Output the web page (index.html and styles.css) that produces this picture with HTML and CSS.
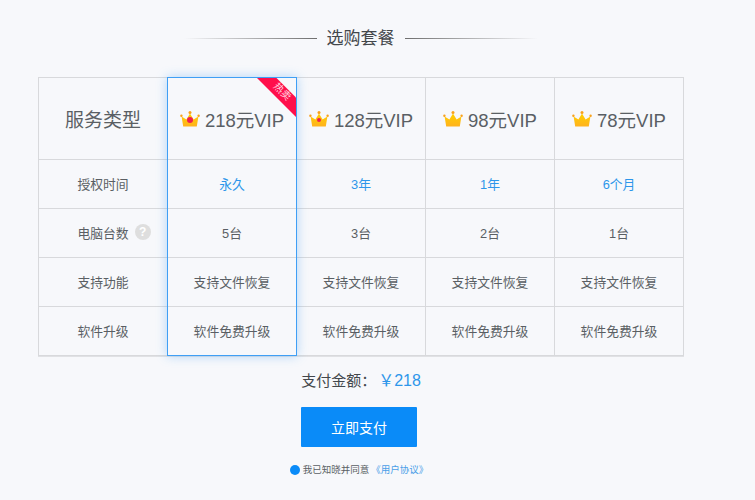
FILE: index.html
```html
<!DOCTYPE html>
<html lang="zh">
<head>
<meta charset="utf-8">
<title>选购套餐</title>
<link rel="stylesheet" href="styles.css">
</head>
<body>
<svg class="defs" width="0" height="0" aria-hidden="true">
  <defs>
    <linearGradient id="gold" x1="0" y1="0" x2="0" y2="1">
      <stop offset="0" stop-color="#ffd000"/>
      <stop offset="1" stop-color="#ffb21e"/>
    </linearGradient>
    <symbol id="crown" viewBox="0 0 20 16">
      <path d="M3.2 15.5 1.6 5.4 6.4 8.4 10 2.4 13.6 8.4 18.4 5.4 16.8 15.5Z" fill="url(#gold)"/>
      <circle cx="1.4" cy="4.8" r="1.2" fill="#f9a11b"/>
      <circle cx="18.6" cy="4.8" r="1.2" fill="#f9a11b"/>
      <circle cx="10" cy="1.6" r="1.5" fill="#f9a11b"/>
    </symbol>
  </defs>
</svg>
<main class="page">
  <header class="title">
    <span class="rule rule-left"></span>
    <h1>选购套餐</h1>
    <span class="rule rule-right"></span>
  </header>

  <section class="plans">
    <div class="cell head head-label">服务类型</div>
    <div class="cell head plan"><span class="crown-wrap"><svg class="crown"><use href="#crown"/></svg><svg class="gem" viewBox="0 0 8 8"><circle cx="4" cy="4" r="4" fill="#f01f4f"/></svg></span><span>218元VIP</span></div>
    <div class="cell head plan"><span class="crown-wrap"><svg class="crown"><use href="#crown"/></svg><svg class="gem gem-small" viewBox="0 0 8 8"><circle cx="4" cy="4" r="4" fill="#f01f4f"/></svg></span><span>128元VIP</span></div>
    <div class="cell head plan"><span class="crown-wrap"><svg class="crown"><use href="#crown"/></svg></span><span>98元VIP</span></div>
    <div class="cell head plan"><span class="crown-wrap"><svg class="crown"><use href="#crown"/></svg></span><span>78元VIP</span></div>

    <div class="cell">授权时间</div>
    <div class="cell accent">永久</div>
    <div class="cell accent">3年</div>
    <div class="cell accent">1年</div>
    <div class="cell accent">6个月</div>

    <div class="cell"><span class="with-help">电脑台数<span class="help">?</span></span></div>
    <div class="cell">5台</div>
    <div class="cell">3台</div>
    <div class="cell">2台</div>
    <div class="cell">1台</div>

    <div class="cell">支持功能</div>
    <div class="cell">支持文件恢复</div>
    <div class="cell">支持文件恢复</div>
    <div class="cell">支持文件恢复</div>
    <div class="cell">支持文件恢复</div>

    <div class="cell">软件升级</div>
    <div class="cell">软件免费升级</div>
    <div class="cell">软件免费升级</div>
    <div class="cell">软件免费升级</div>
    <div class="cell">软件免费升级</div>

    <div class="selected"><span class="ribbon"></span><span class="ribbon-text">热卖</span></div>
  </section>

  <section class="checkout">
    <p class="amount">支付金额：<span class="price">￥218</span></p>
    <button class="pay" type="button">立即支付</button>
    <p class="agree"><span class="radio"></span>我已知晓并同意<a class="link" href="#">《用户协议》</a></p>
  </section>
</main>
</body>
</html>
```

FILE: styles.css
```css
* { box-sizing: border-box; }

html, body { margin: 0; }

body {
  height: 500px;
  overflow: hidden;
  background: #f7f8fb;
  color: #5a5f64;
  font-family: "Liberation Sans", "Noto Sans CJK SC", sans-serif;
}

.defs { position: absolute; }

.page { width: 755px; }

.title {
  display: flex;
  align-items: center;
  justify-content: center;
  gap: 10px;
  width: 721px;
  height: 77px;
}

.title h1 {
  margin: 0;
  font-size: 17px;
  font-weight: 400;
  color: #43474b;
  line-height: 24px;
}

.rule { width: 133px; height: 1px; }
.rule-left { background: linear-gradient(90deg, rgba(110,110,110,0), #6e6e6e); }
.rule-right { background: linear-gradient(90deg, #6e6e6e, rgba(110,110,110,0)); }

.plans {
  position: relative;
  display: grid;
  grid-template-columns: repeat(5, 129px);
  grid-template-rows: 82px 49px 49px 49px 49px;
  width: 646px;
  margin-left: 38px;
  border-top: 1px solid #d8d9dc;
  border-left: 1px solid #d8d9dc;
  box-shadow: 0 1px 0 #e0e1e4;
  font-size: 12.8px;
}

.cell {
  display: flex;
  align-items: center;
  justify-content: center;
  padding-bottom: 2px;
  border-right: 1px solid #d8d9dc;
  border-bottom: 1px solid #d8d9dc;
}

.head { padding-bottom: 0; }

.head-label { font-size: 19px; }

.plan { font-size: 18.5px; gap: 5px; }

.crown-wrap {
  position: relative;
  display: flex;
  width: 20px;
  height: 16px;
  flex: none;
}

.crown { width: 20px; height: 16px; }

.gem {
  position: absolute;
  left: 7px;
  top: 6px;
  width: 6px;
  height: 6px;
}

.gem-small { left: 8px; top: 7px; width: 4px; height: 4px; }

.accent { color: #2d96ea; }

.with-help { position: relative; }

.help {
  position: absolute;
  left: calc(100% + 6px);
  top: 50%;
  display: flex;
  align-items: center;
  justify-content: center;
  width: 16px;
  height: 16px;
  margin-top: -8px;
  border-radius: 50%;
  background: #dedede;
  color: #fff;
  font-size: 12px;
  font-weight: 700;
}

.selected {
  position: absolute;
  grid-column: 2 / 3;
  grid-row: 1 / 6;
  inset: -1px 0 0 -1px;
  border: 1px solid #3f9ff5;
  box-shadow: 0 0 10px rgba(70, 160, 245, .4);
}

.ribbon {
  position: absolute;
  top: 0;
  right: 0;
  width: 39px;
  height: 39px;
  background: #ff0f4b;
  clip-path: polygon(0 0, 100% 100%, 100% 50%, 50% 0);
}

.ribbon-text {
  position: absolute;
  top: 8px;
  right: 4px;
  font-size: 10px;
  line-height: 12px;
  color: #ffd6e0;
  transform: rotate(45deg);
}

.checkout {
  display: flex;
  flex-direction: column;
  align-items: center;
  width: 718px;
  padding-top: 14px;
}

.amount {
  margin: 0 0 0 4px;
  font-size: 15px;
  line-height: 22px;
  color: #43474b;
}

.price { color: #2d96ea; margin-left: 2px; font-size: 16px; }

.pay {
  width: 116px;
  height: 40px;
  margin-top: 15px;
  border: 0;
  border-radius: 1px;
  background: #0a8bf8;
  color: #fff;
  font: inherit;
  font-size: 14px;
}

.agree {
  display: flex;
  align-items: center;
  margin: 15px 0 0;
  font-size: 9.5px;
  line-height: 16px;
}

.radio {
  width: 10px;
  height: 10px;
  margin-right: 3px;
  border-radius: 50%;
  background: #0a8bf8;
}

.link { color: #4a9ee8; text-decoration: none; margin-left: 2px; }
```
